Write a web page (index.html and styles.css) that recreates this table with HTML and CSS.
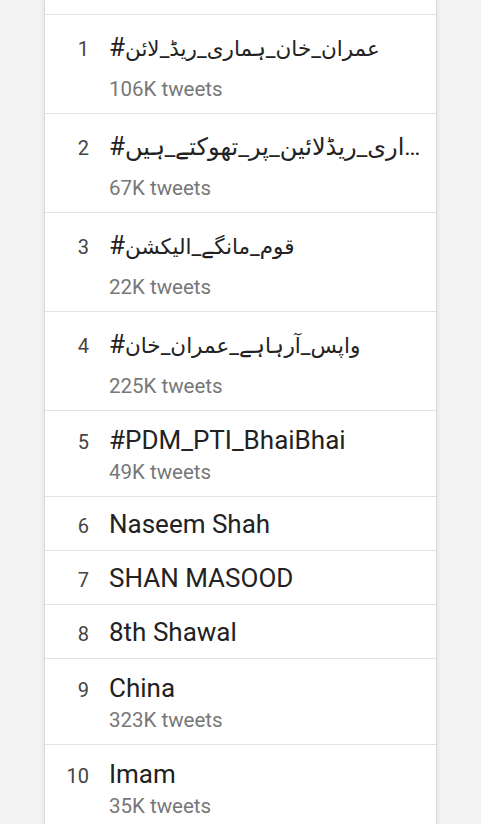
FILE: index.html
```html
<!DOCTYPE html>
<html lang="en">
<head>
<meta charset="utf-8">
<title>Trends</title>
<link rel="stylesheet" href="styles.css">
</head>
<body>
<div class="card">
  <div class="stub"></div>
  <div class="row urdu">
    <span class="rank">1</span>
    <div class="body">
      <div class="title">#<span dir="rtl" class="ur">عمران_خان_ہماری_ریڈ_لائن</span></div>
      <div class="count">106K tweets</div>
    </div>
  </div>
  <div class="row urdu">
    <span class="rank">2</span>
    <div class="body">
      <div class="title">#<span dir="rtl" class="ur wide">…اری_ریڈلائین_پر_تھوکتے_ہیں</span></div>
      <div class="count">67K tweets</div>
    </div>
  </div>
  <div class="row urdu">
    <span class="rank">3</span>
    <div class="body">
      <div class="title">#<span dir="rtl" class="ur">قوم_مانگے_الیکشن</span></div>
      <div class="count">22K tweets</div>
    </div>
  </div>
  <div class="row urdu">
    <span class="rank">4</span>
    <div class="body">
      <div class="title">#<span dir="rtl" class="ur">واپس_آرہاہے_عمران_خان</span></div>
      <div class="count">225K tweets</div>
    </div>
  </div>
  <div class="row double">
    <span class="rank">5</span>
    <div class="body">
      <div class="title">#PDM_PTI_BhaiBhai</div>
      <div class="count">49K tweets</div>
    </div>
  </div>
  <div class="row">
    <span class="rank">6</span>
    <div class="body">
      <div class="title">Naseem Shah</div>
    </div>
  </div>
  <div class="row">
    <span class="rank">7</span>
    <div class="body">
      <div class="title">SHAN MASOOD</div>
    </div>
  </div>
  <div class="row">
    <span class="rank">8</span>
    <div class="body">
      <div class="title">8th Shawal</div>
    </div>
  </div>
  <div class="row double">
    <span class="rank">9</span>
    <div class="body">
      <div class="title">China</div>
      <div class="count">323K tweets</div>
    </div>
  </div>
  <div class="row double">
    <span class="rank">10</span>
    <div class="body">
      <div class="title">Imam</div>
      <div class="count">35K tweets</div>
    </div>
  </div>
</div>
</body>
</html>
```
FILE: styles.css
```css
html, body {
  margin: 0;
  padding: 0;
}
body {
  background: #f4f4f4;
  font-family: Roboto, "DejaVu Sans", sans-serif;
  height: 824px;
  overflow: hidden;
}
.card {
  margin-left: 44px;
  width: 391px;
  min-height: 824px;
  background: #fff;
  border-left: 1px solid #dcdcdc;
  border-right: 1px solid #dcdcdc;
  box-shadow: 0 0 5px rgba(0, 0, 0, 0.10);
}
.stub {
  height: 14px;
  border-bottom: 1px solid #e2e2e2;
}
.row {
  display: grid;
  grid-template-columns: 44px 1fr;
  column-gap: 20px;
  padding: 10px 0 9px;
  border-bottom: 1px solid #e2e2e2;
  align-items: baseline;
}
.row.double,
.row.urdu {
  padding-top: 12px;
}
.rank {
  text-align: right;
  font-size: 20px;
  color: #444;
}
.body {
  min-width: 0;
}
.title {
  font-size: 26px;
  line-height: 34px;
  color: #222;
  white-space: nowrap;
}
.urdu .title {
  line-height: 40px;
  margin-bottom: 7px;
}
.ur {
  unicode-bidi: isolate;
  font-size: 21.5px;
  line-height: 20px;
}
.ur.wide {
  font-size: 24px;
}
.count {
  font-size: 20.5px;
  line-height: 30px;
  color: #777;
}
```
